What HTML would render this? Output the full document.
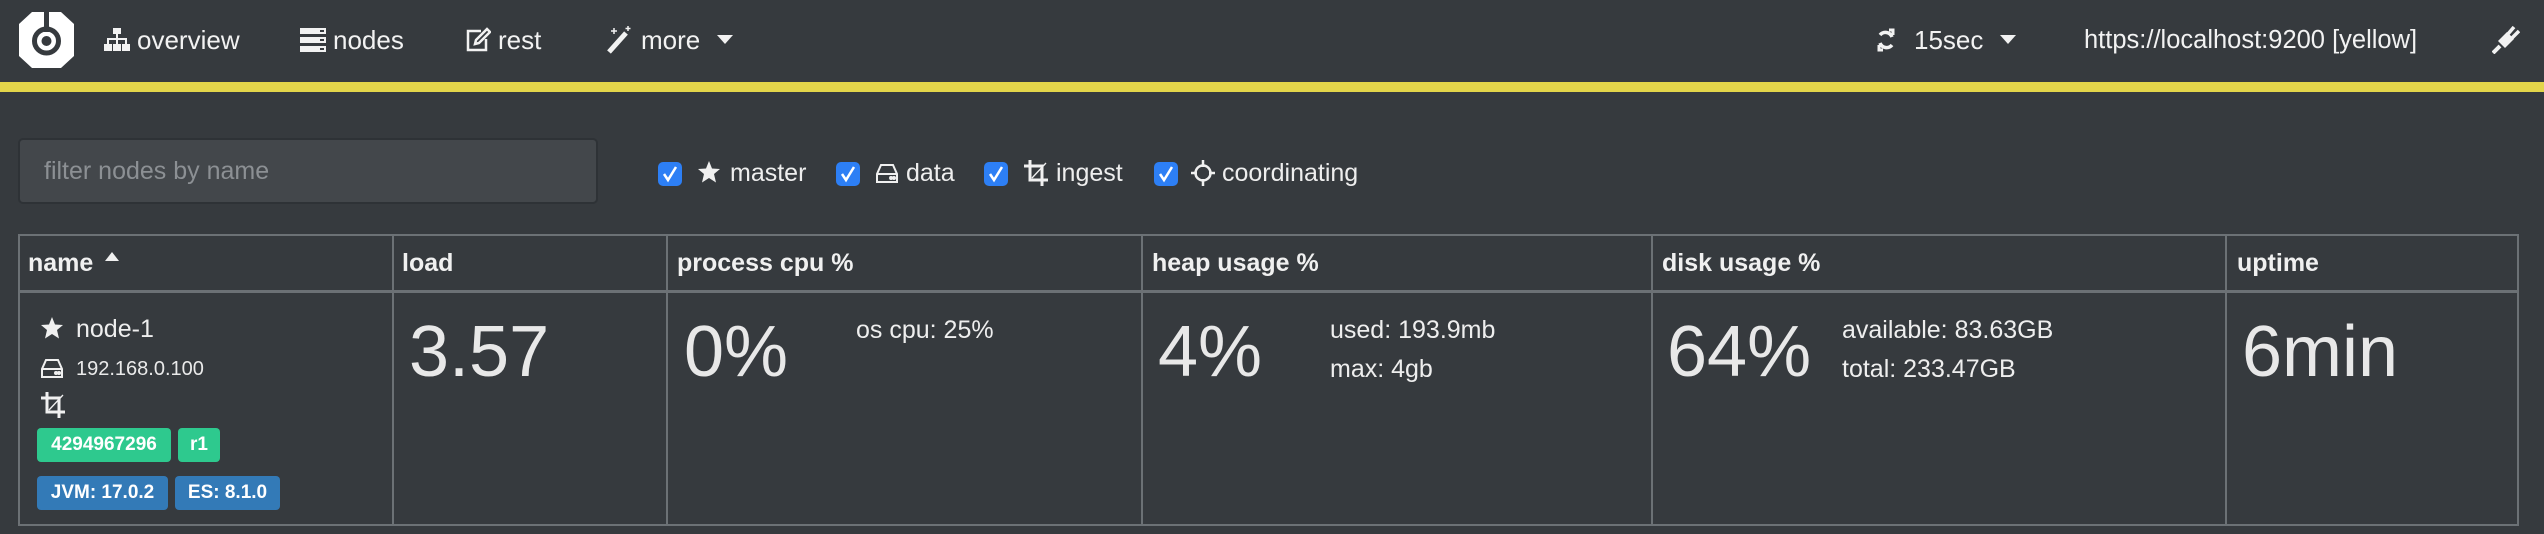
<!DOCTYPE html>
<html><head><meta charset="utf-8"><style>
*{margin:0;padding:0;box-sizing:border-box}
body{width:2544px;height:534px;background:#363a3e;font-family:"Liberation Sans",Arial,sans-serif;color:#eaeaea;position:relative;overflow:hidden}
.a{position:absolute;white-space:nowrap}
.nav{font-size:26px;color:#f2f2f2;line-height:30px}
.hdr{font-size:25px;font-weight:bold;line-height:28px;color:#f0f0f0}
.big{font-size:72px;line-height:72px;font-weight:300;color:#e8e8e8}
.sm{font-size:25px;line-height:28px;color:#eee}
.cb{width:24px;height:24px;background:#2d7ff5;border-radius:5px;top:162px}
.cb svg{display:block}
.badge{color:#fff;font-weight:bold;font-size:19px;line-height:34px;height:34px;border-radius:4px;text-align:center}
.vl{position:absolute;top:234px;width:2px;height:292px;background:#6c7175}
</style></head><body>
<div class="a" style="left:0;top:82px;width:2544px;height:10px;background:#e3d54a"></div>
<svg class="a" style="left:18px;top:10px" width="57" height="60" viewBox="0 0 57 60"><path d="M14 2 L43 2 L56 14 L56 46 L43 58 L14 58 L1 46 L1 14 Z" fill="#fff"/><circle cx="28.5" cy="31" r="12" fill="none" stroke="#363a3e" stroke-width="5"/><rect x="26" y="0" width="5" height="22" fill="#363a3e"/><circle cx="28.5" cy="31" r="5" fill="#363a3e"/></svg>
<svg class="a" style="left:104px;top:28px" width="26" height="24" viewBox="0 0 26 24" fill="#f2f2f2"><rect x="9" y="0" width="8" height="6"/><rect x="12" y="6" width="2" height="5"/><rect x="3" y="10" width="20" height="2"/><rect x="3" y="10" width="2" height="6"/><rect x="12" y="10" width="2" height="6"/><rect x="21" y="10" width="2" height="6"/><rect x="0" y="16" width="8" height="7"/><rect x="9" y="16" width="8" height="7"/><rect x="18" y="16" width="8" height="7"/></svg>
<div class="a nav" style="left:137px;top:25px">overview</div>
<svg class="a" style="left:300px;top:28px" width="26" height="24" viewBox="0 0 26 24" fill="#f2f2f2"><rect x="0" y="0" width="26" height="6"/><rect x="0" y="9" width="26" height="6"/><rect x="0" y="18" width="26" height="6"/><rect x="20" y="2" width="4" height="2" fill="#363a3e"/><rect x="20" y="11" width="4" height="2" fill="#363a3e"/><rect x="20" y="20" width="4" height="2" fill="#363a3e"/></svg>
<div class="a nav" style="left:333px;top:25px">nodes</div>
<svg class="a" style="left:465px;top:27px" width="26" height="26" viewBox="0 0 26 26" fill="none" stroke="#f2f2f2" stroke-width="2.5"><path d="M16 4 H3 V23 H21 V12"/><path d="M10 17 L11 13 L22 2 L25 5 L14 16 Z"/></svg>
<div class="a nav" style="left:498px;top:25px">rest</div>
<svg class="a" style="left:606px;top:26px" width="26" height="28" viewBox="0 0 26 28" stroke="#f2f2f2"><path d="M3 26 L20 7" stroke-width="5"/><path d="M8 2 v6 M5 5 h6 M22 0 v5 M19.5 2.5 h5" stroke-width="1.5"/></svg>
<div class="a nav" style="left:641px;top:25px">more</div>
<svg class="a" style="left:717px;top:35px" width="16" height="10"><path d="M0 0 H16 L8 9 Z" fill="#f2f2f2"/></svg>
<svg class="a" style="left:1877px;top:28px" width="18" height="24" viewBox="0 0 18 24" fill="none" stroke="#f2f2f2" stroke-width="3.5"><path d="M15 9 A7 7 0 0 0 3 7"/><path d="M3 15 A7 7 0 0 0 15 17"/><path d="M12 2 L16 2 L16 7" stroke-width="3"/><path d="M6 22 L2 22 L2 17" stroke-width="3"/></svg>
<div class="a nav" style="left:1914px;top:25px">15sec</div>
<svg class="a" style="left:2000px;top:35px" width="16" height="10"><path d="M0 0 H16 L8 9 Z" fill="#f2f2f2"/></svg>
<div class="a nav" style="left:2084px;top:25px;font-size:25.5px">https://localhost:9200 [yellow]</div>
<svg class="a" style="left:2492px;top:26px" width="28" height="28" viewBox="0 0 28 28" fill="#f2f2f2"><path d="M1 27 L8 20" stroke="#f2f2f2" stroke-width="4"/><path d="M6 15 L15 6 L22 13 L13 22 Z"/><path d="M16 8 L22 1 M20 12 L27 5" stroke="#f2f2f2" stroke-width="3.5"/></svg>
<div class="a" style="left:18px;top:138px;width:580px;height:66px;background:#43474b;border:2px solid #2e3236;border-radius:5px"></div>
<div class="a" style="left:44px;top:157px;font-size:25px;color:#8c9094;line-height:28px">filter nodes by name</div>
<div class="a cb" style="left:658px"><svg width="24" height="24"><path d="M6 12 L10 18 L18 5" stroke="#fff" stroke-width="2.5" fill="none"/></svg></div>
<svg class="a" style="left:697px;top:160px" width="24" height="24" viewBox="0 0 24 24" fill="#f0f0f0"><path d="M12 1 L15 8.5 L23 9 L17 14 L19 22.5 L12 18 L5 22.5 L7 14 L1 9 L9 8.5 Z"/></svg>
<div class="a sm" style="left:730px;top:159px;font-size:25px">master</div>
<div class="a cb" style="left:836px"><svg width="24" height="24"><path d="M6 12 L10 18 L18 5" stroke="#fff" stroke-width="2.5" fill="none"/></svg></div>
<svg class="a" style="left:876px;top:162px" width="22" height="22" viewBox="0 0 22 22" fill="none" stroke="#f0f0f0" stroke-width="2"><path d="M5 3 H17 L21 12 V20 H1 V12 Z M1 12 H21"/><circle cx="15" cy="16" r="1" fill="#f0f0f0"/><circle cx="18" cy="16" r="1" fill="#f0f0f0"/></svg>
<div class="a sm" style="left:906px;top:159px;font-size:25px">data</div>
<div class="a cb" style="left:984px"><svg width="24" height="24"><path d="M6 12 L10 18 L18 5" stroke="#fff" stroke-width="2.5" fill="none"/></svg></div>
<svg class="a" style="left:1024px;top:160px" width="24" height="26" viewBox="0 0 24 26" fill="none" stroke="#f0f0f0" stroke-width="3"><path d="M6 0 V20 H24 M0 6 H18 V26"/><path d="M8 18 L22 3" stroke-width="1.3"/></svg>
<div class="a sm" style="left:1056px;top:159px;font-size:25px">ingest</div>
<div class="a cb" style="left:1154px"><svg width="24" height="24"><path d="M6 12 L10 18 L18 5" stroke="#fff" stroke-width="2.5" fill="none"/></svg></div>
<svg class="a" style="left:1191px;top:160px" width="24" height="26" viewBox="0 0 24 26" fill="none" stroke="#f0f0f0" stroke-width="2.5"><circle cx="12" cy="13" r="7.5"/><path d="M12 0 V7 M12 19 V26 M0 13 H6 M18 13 H24"/></svg>
<div class="a sm" style="left:1222px;top:159px;font-size:25px">coordinating</div>
<div class="a" style="left:18px;top:234px;width:2501px;height:292px;border:2px solid #6c7175"></div>
<div class="a" style="left:18px;top:290px;width:2501px;height:3px;background:#6c7175"></div>
<div class="vl" style="left:392px"></div>
<div class="vl" style="left:666px"></div>
<div class="vl" style="left:1141px"></div>
<div class="vl" style="left:1651px"></div>
<div class="vl" style="left:2225px"></div>
<div class="a hdr" style="left:28px;top:249px">name</div>
<svg class="a" style="left:105px;top:252px" width="14" height="9"><path d="M0 9 L7 0 L14 9 Z" fill="#f0f0f0"/></svg>
<div class="a hdr" style="left:402px;top:249px">load</div>
<div class="a hdr" style="left:677px;top:249px">process cpu %</div>
<div class="a hdr" style="left:1152px;top:249px">heap usage %</div>
<div class="a hdr" style="left:1662px;top:249px">disk usage %</div>
<div class="a hdr" style="left:2237px;top:249px">uptime</div>
<svg class="a" style="left:40px;top:316px" width="24" height="24" viewBox="0 0 24 24" fill="#f0f0f0"><path d="M12 1 L15 8.5 L23 9 L17 14 L19 22.5 L12 18 L5 22.5 L7 14 L1 9 L9 8.5 Z"/></svg>
<div class="a sm" style="left:76px;top:315px;font-size:25px">node-1</div>
<svg class="a" style="left:41px;top:357px" width="22" height="22" viewBox="0 0 22 22" fill="none" stroke="#f0f0f0" stroke-width="2"><path d="M5 3 H17 L21 12 V20 H1 V12 Z M1 12 H21"/><circle cx="15" cy="16" r="1" fill="#f0f0f0"/><circle cx="18" cy="16" r="1" fill="#f0f0f0"/></svg>
<div class="a" style="left:76px;top:357px;font-size:20px;line-height:24px">192.168.0.100</div>
<svg class="a" style="left:41px;top:392px" width="24" height="26" viewBox="0 0 24 26" fill="none" stroke="#f0f0f0" stroke-width="3"><path d="M6 0 V20 H24 M0 6 H18 V26"/><path d="M8 18 L22 3" stroke-width="1.3"/></svg>
<div class="a badge" style="left:37px;top:428px;width:134px;background:#2ec98e">4294967296</div>
<div class="a badge" style="left:178px;top:428px;width:42px;background:#2ec98e">r1</div>
<div class="a badge" style="left:37px;top:476px;width:131px;background:#337ab7">JVM: 17.0.2</div>
<div class="a badge" style="left:175px;top:476px;width:105px;background:#337ab7">ES: 8.1.0</div>
<div class="a big" style="left:409px;top:316px">3.57</div>
<div class="a big" style="left:684px;top:316px">0%</div>
<div class="a sm" style="left:856px;top:316px">os cpu: 25%</div>
<div class="a big" style="left:1158px;top:316px">4%</div>
<div class="a sm" style="left:1330px;top:316px">used: 193.9mb</div>
<div class="a sm" style="left:1330px;top:355px">max: 4gb</div>
<div class="a big" style="left:1667px;top:316px">64%</div>
<div class="a sm" style="left:1842px;top:316px">available: 83.63GB</div>
<div class="a sm" style="left:1842px;top:355px">total: 233.47GB</div>
<div class="a big" style="left:2242px;top:316px">6min</div>
</body></html>
